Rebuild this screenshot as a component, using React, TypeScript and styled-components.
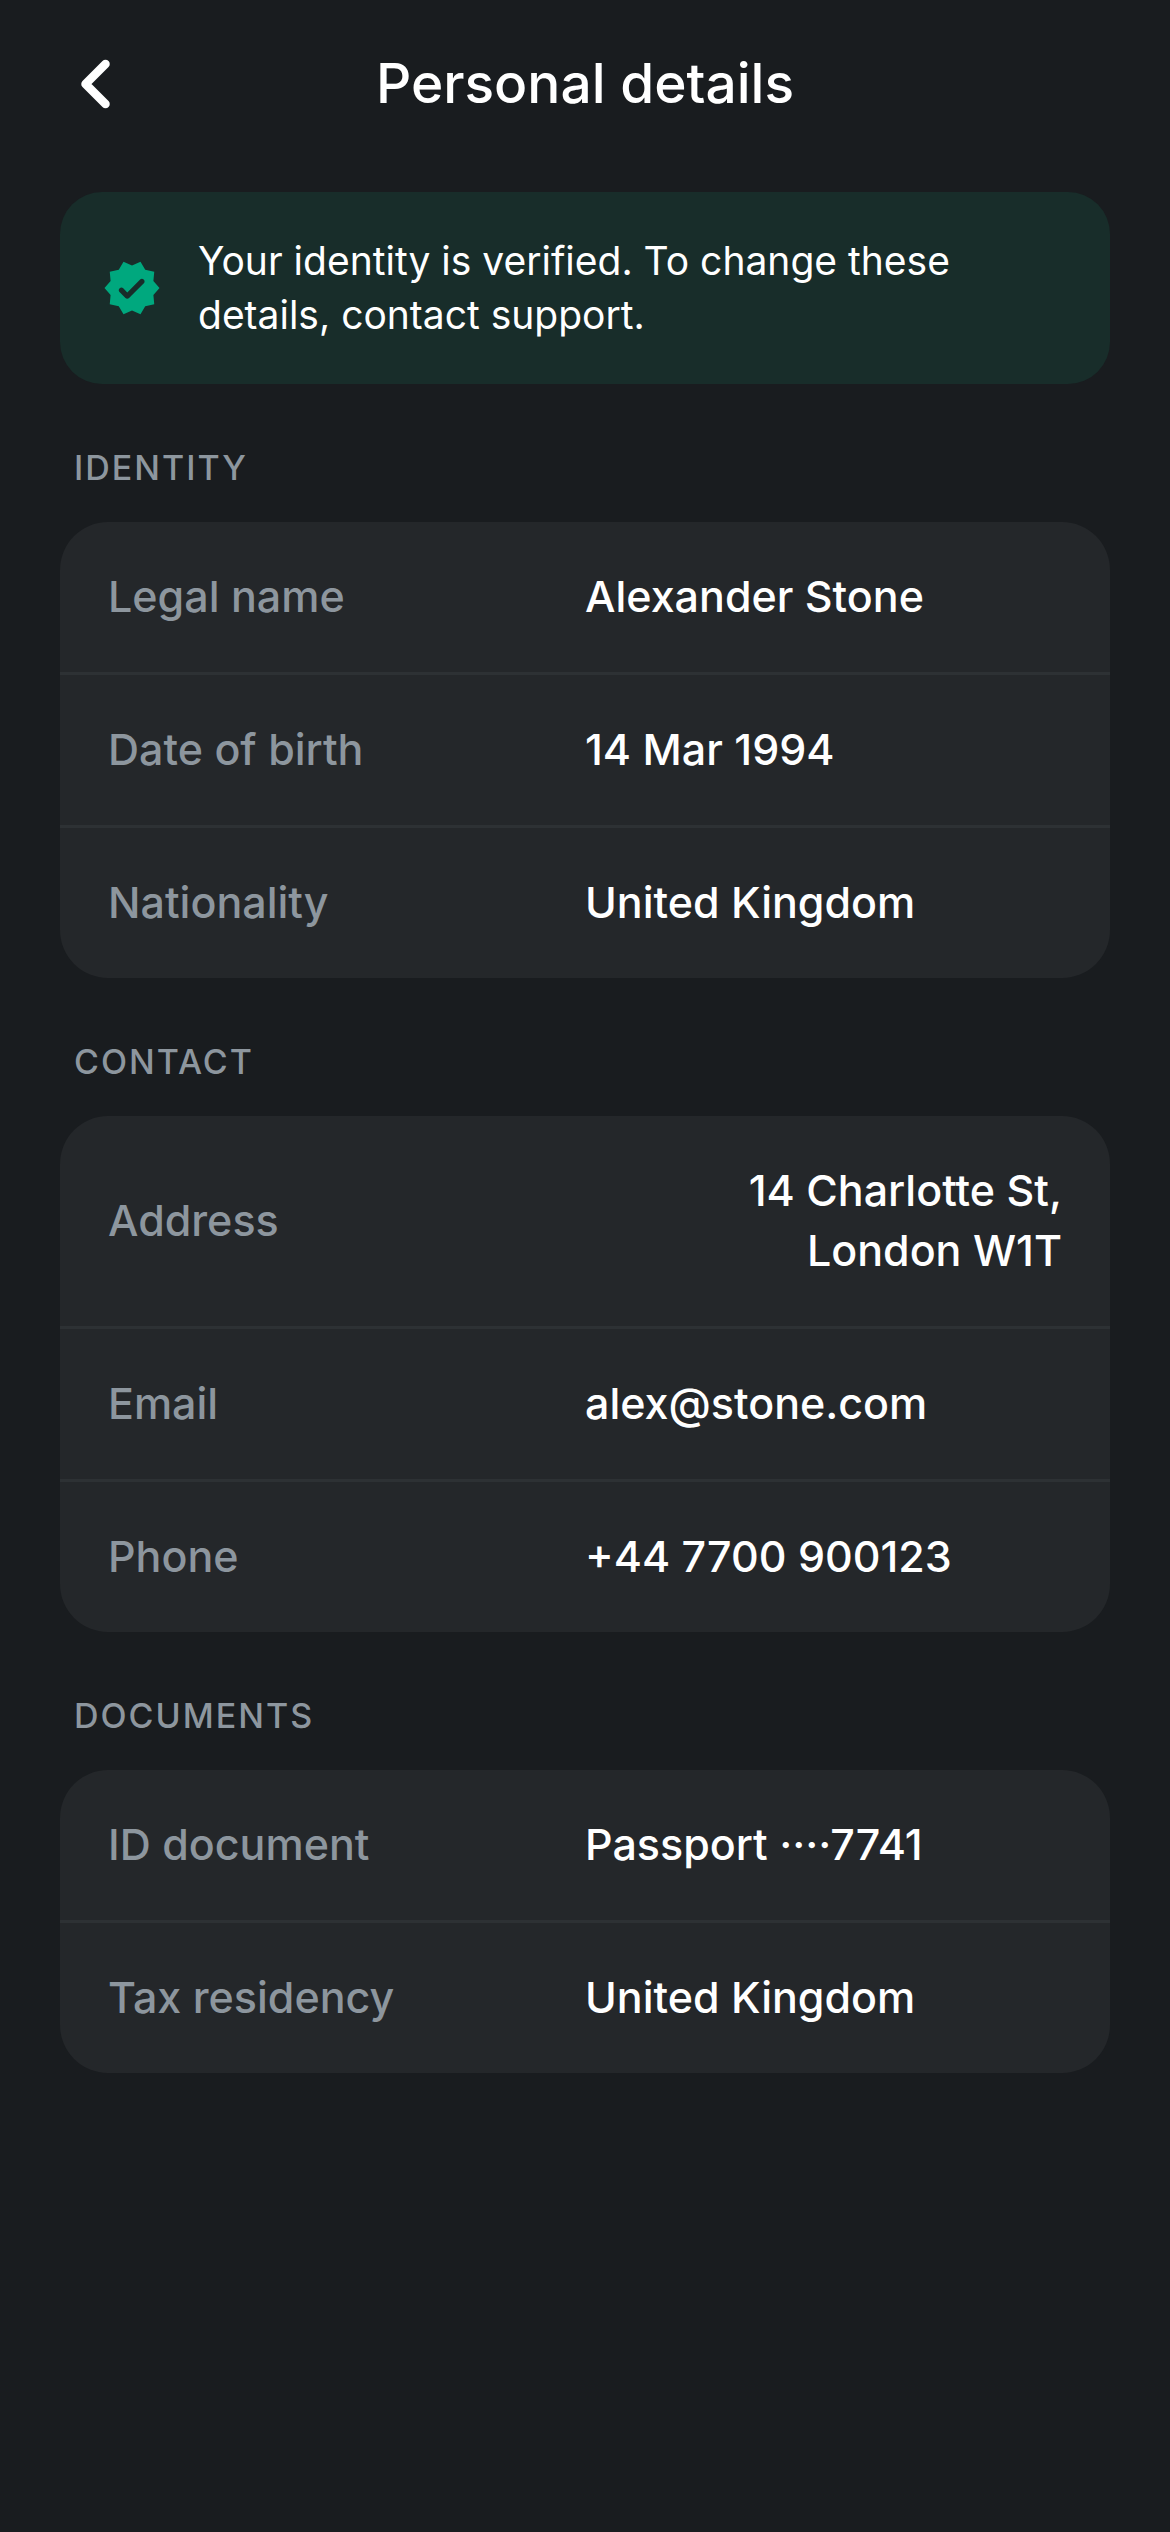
import React from "react";
import styled, { createGlobalStyle } from "styled-components";

const colors = {
  page: "#191c1f",
  card: "#24272a",
  divider: "#2d3134",
  notice: "#182d2a",
  accent: "#00a87e",
  text: "#ffffff",
  muted: "#8d969e",
};

const GlobalStyle = createGlobalStyle`
  *, *::before, *::after { box-sizing: border-box; }
  body {
    margin: 0;
    background: ${colors.page};
    color: ${colors.text};
    font-family: Inter, "Liberation Sans", sans-serif;
    font-weight: 500;
  }
`;

const Screen = styled.div`
  min-height: 100vh;
`;

const TopBar = styled.header`
  display: grid;
  grid-template-columns: 72px 1fr 72px;
  align-items: center;
  height: 165px;
  padding: 0 60px;
`;

const BackButton = styled.button`
  display: flex;
  align-items: center;
  justify-content: center;
  width: 72px;
  height: 72px;
  padding: 0;
  border: 0;
  background: none;
  color: inherit;
  cursor: pointer;
`;

const Title = styled.h1`
  margin: 0;
  font-size: 55px;
  font-weight: inherit;
  line-height: 66px;
  text-align: center;
`;

const Content = styled.main`
  padding: 27px 60px 60px;
`;

const Notice = styled.div`
  display: flex;
  align-items: center;
  gap: 36px;
  padding: 42px;
  border-radius: 42px;
  background: ${colors.notice};
`;

const NoticeIcon = styled.svg`
  flex: none;
  width: 60px;
  height: 60px;
  fill: ${colors.accent};
`;

const NoticeText = styled.p`
  margin: 0;
  font-size: 39px;
  font-weight: 400;
  line-height: 54px;
`;

const SectionTitle = styled.h2`
  margin: 0;
  padding: 60px 14px 30px;
  color: ${colors.muted};
  font-size: 34px;
  font-weight: inherit;
  line-height: 48px;
  letter-spacing: 2px;
  text-transform: uppercase;
`;

const Card = styled.dl`
  margin: 0;
  border-radius: 48px;
  background: ${colors.card};
`;

const Row = styled.div`
  display: grid;
  grid-template-columns: 1fr 1fr;
  align-items: center;
  padding: 44px 48px 46px;
  font-size: 43px;
  line-height: 60px;

  & + & {
    border-top: 3px solid ${colors.divider};
  }
`;

const Label = styled.dt`
  color: ${colors.muted};
`;

const Value = styled.dd<{ $multiline: boolean }>`
  justify-self: ${(p) => (p.$multiline ? "end" : "start")};
  margin: 0;
  text-align: right;
  white-space: pre-line;
`;

type Field = { label: string; value: string };

const sections: { title: string; fields: Field[] }[] = [
  {
    title: "Identity",
    fields: [
      { label: "Legal name", value: "Alexander Stone" },
      { label: "Date of birth", value: "14 Mar 1994" },
      { label: "Nationality", value: "United Kingdom" },
    ],
  },
  {
    title: "Contact",
    fields: [
      { label: "Address", value: "14 Charlotte St,\nLondon W1T" },
      { label: "Email", value: "alex@stone.com" },
      { label: "Phone", value: "+44 7700 900123" },
    ],
  },
  {
    title: "Documents",
    fields: [
      { label: "ID document", value: "Passport ····7741" },
      { label: "Tax residency", value: "United Kingdom" },
    ],
  },
];

export default function App() {
  return (
    <Screen>
      <GlobalStyle />
      <TopBar>
        <BackButton type="button" aria-label="Back">
          <svg width="72" height="72" viewBox="0 0 72 72" fill="none" aria-hidden="true">
            <path
              d="M45.5 17l-20 20 20 20"
              stroke="currentColor"
              strokeWidth="8.5"
              strokeLinecap="round"
              strokeLinejoin="round"
            />
          </svg>
        </BackButton>
        <Title>Personal details</Title>
      </TopBar>
      <Content>
        <Notice>
          <NoticeIcon viewBox="0 0 24 24" aria-hidden="true">
            <path d="M23 12l-2.44-2.79.34-3.69-3.61-.82L15.4 1.5 12 2.96 8.6 1.5 6.71 4.69 3.1 5.5l.34 3.7L1 12l2.44 2.79-.34 3.7 3.61.82L8.6 22.5l3.4-1.47 3.4 1.46 1.89-3.19 3.61-.82-.34-3.69L23 12zM9.38 16.01L7 13.61c-.39-.39-.39-1.02 0-1.41l.07-.07c.39-.39 1.03-.39 1.42 0l1.61 1.62 5.15-5.16c.39-.39 1.03-.39 1.42 0l.07.07c.39.39.39 1.02 0 1.41l-5.92 5.94c-.41.39-1.04.39-1.44 0z" />
          </NoticeIcon>
          <NoticeText>
            Your identity is verified. To change these details, contact support.
          </NoticeText>
        </Notice>
        {sections.map((section) => (
          <section key={section.title}>
            <SectionTitle>{section.title}</SectionTitle>
            <Card>
              {section.fields.map((field) => (
                <Row key={field.label}>
                  <Label>{field.label}</Label>
                  <Value $multiline={field.value.includes("\n")}>{field.value}</Value>
                </Row>
              ))}
            </Card>
          </section>
        ))}
      </Content>
    </Screen>
  );
}
